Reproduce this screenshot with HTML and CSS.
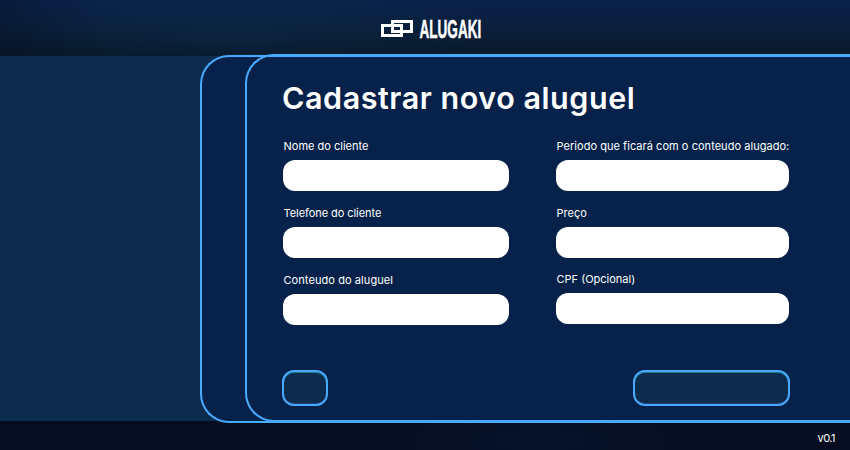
FILE: index.html
```html
<!DOCTYPE html>
<html lang="pt-BR">
<head>
<meta charset="utf-8">
<title>Alugaki</title>
<link rel="stylesheet" href="styles.css">
</head>
<body>
<header class="header">
  <svg class="logo" width="114" height="38" viewBox="-6 -6 114 38">
    <g fill="none" stroke="#fff" stroke-width="3">
      <rect x="1.5" y="7.5" width="19" height="10"/>
      <rect x="11.5" y="3.5" width="19" height="10"/>
    </g>
    <text class="brand" transform="translate(38.5 20) scale(.49 1)" textLength="126" lengthAdjust="spacingAndGlyphs">ALUGAKI</text>
  </svg>
</header>
<main class="main">
  <section class="panel">
    <form class="sheet">
      <h1 class="title">Cadastrar novo aluguel</h1>
      <div class="fields">
        <div class="column">
          <label class="field"><span class="label">Nome do cliente</span><input class="input"></label>
          <label class="field"><span class="label phone">Telefone do cliente</span><input class="input"></label>
          <label class="field"><span class="label content">Conteudo do aluguel</span><input class="input"></label>
        </div>
        <div class="column">
          <label class="field"><span class="label period">Periodo que ficará com o conteudo alugado:</span><input class="input"></label>
          <label class="field short"><span class="label">Preço</span><input class="input"></label>
          <label class="field"><span class="label">CPF (Opcional)</span><input class="input"></label>
        </div>
      </div>
      <div class="actions">
        <button type="button" class="button back"></button>
        <button type="button" class="button submit"></button>
      </div>
    </form>
  </section>
</main>
<footer class="footer"><span class="version">v0.1</span></footer>
</body>
</html>
```
FILE: styles.css
```css
* { box-sizing: border-box; }
body {
  margin: 0;
  width: 850px;
  height: 450px;
  overflow: hidden;
  display: flex;
  flex-direction: column;
  background: #0d2b4d;
  color: #fff;
  font-family: Inter, "Open Sans", sans-serif;
}
.header {
  height: 56px;
  flex: none;
  display: flex;
  justify-content: center;
  padding: 12px 0 0 13px;
  background:
    linear-gradient(90deg, rgba(5, 12, 32, .3), transparent 12%),
    radial-gradient(ellipse 260px 60px at 230px 20px, rgba(10, 45, 75, .45), transparent),
    linear-gradient(#09214a, #0a1f3b 50%, #081828);
}
.logo { display: block; flex: none; }
.brand {
  font: 700 25.5px "Liberation Sans", sans-serif;
  fill: #fff;
  stroke: #fff;
  stroke-width: .5px;
}
.main { position: relative; z-index: 1; height: 365px; flex: none; display: flex; }
.panel {
  flex: none;
  width: 650px;
  margin: -1px 0 -2px 200px;
  border: 2px solid #48aaff;
  border-right: 0;
  border-radius: 29px 0 0 29px;
  background: #06224a;
  display: flex;
}
.sheet {
  flex: 1;
  margin: -3px 0 -1px 43px;
  border: 2px solid #48aaff;
  border-right: 0;
  border-radius: 29px 0 0 29px;
  padding: 24px 0 0 36px;
}
.title {
  margin: 0 0 0 -1px;
  height: 58px;
  line-height: 36px;
  font-size: 30.5px;
  font-weight: 600;
  letter-spacing: .54px;
  white-space: nowrap;
}
.fields { display: grid; grid-template-columns: 226px 233px; column-gap: 47px; }
.field { display: block; height: 67px; }
.short { height: 66px; }
.label {
  display: block;
  height: 22px;
  padding-left: .5px;
  line-height: 16px;
  font-size: 11px;
  white-space: nowrap;
}
.phone { letter-spacing: -.06px; }
.content { letter-spacing: .08px; }
.period { letter-spacing: .04px; }
.input {
  display: block;
  width: 100%;
  height: 31px;
  border: 0;
  border-radius: 12px;
  background: #fff;
}
.actions {
  display: flex;
  justify-content: space-between;
  width: 508px;
  margin: 31px 0 0 -1px;
}
.button {
  height: 36px;
  padding: 0;
  border: 2px solid #48aaff;
  border-radius: 12px;
  background: #0d2b4d;
  box-shadow: inset 0 1px #207b91, inset 0 -1px #203e70;
}
.back { width: 46px; }
.submit { width: 157px; }
.footer {
  height: 29px;
  flex: none;
  display: flex;
  justify-content: flex-end;
  padding: 9px 15px 0 0;
  background: radial-gradient(ellipse 170px 50px at 540px 20px, #06132b, transparent), #070d20;
}
.version { font-size: 11px; line-height: 16px; letter-spacing: -.5px; }
```
